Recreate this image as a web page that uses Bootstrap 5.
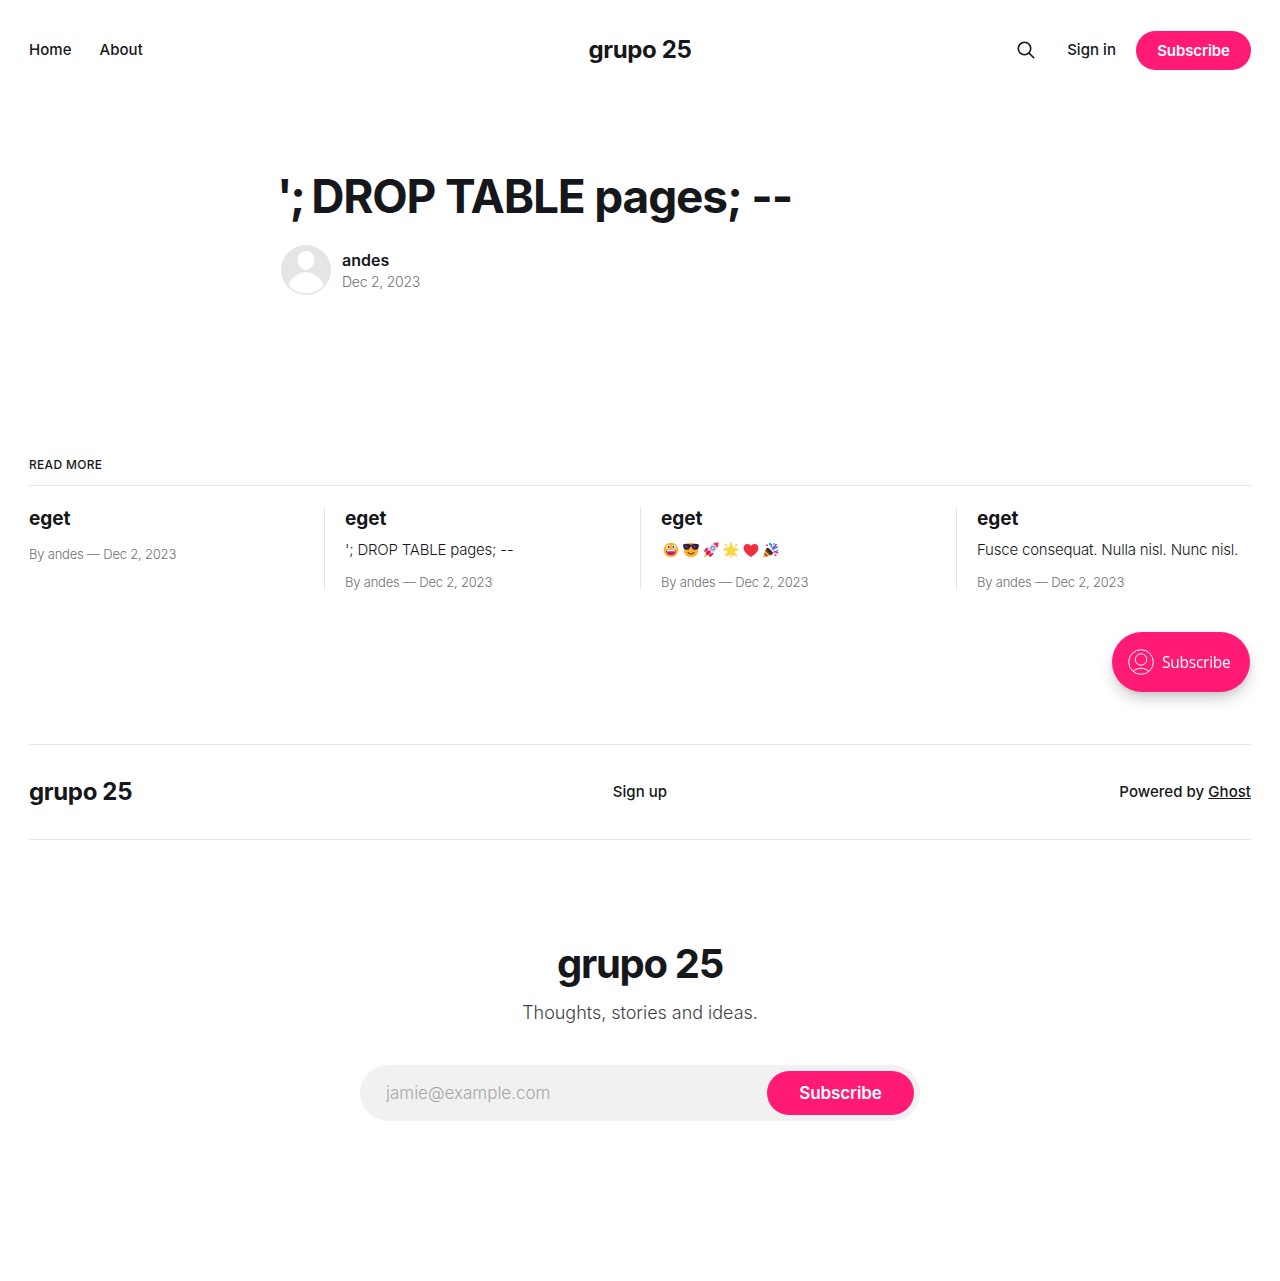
<!DOCTYPE html>
<html lang="en">
<head>
<meta charset="utf-8">
<meta name="viewport" content="width=device-width, initial-scale=1">
<title>grupo 25</title>
<link href="https://cdn.jsdelivr.net/npm/bootstrap@5.3.0/dist/css/bootstrap.min.css" rel="stylesheet">
<style>
  :root { --accent: #ff1a75; --ink: #15171a; --muted: #6f7071; --rule: #e8e8e8; }
  body { font-family: Inter, "Liberation Sans", sans-serif; color: var(--ink); background: #fff; font-size: 15px; line-height: 1.6; }
  a { color: inherit; text-decoration: none; }
  .site-wrap { padding: 0 29px; }
  .site-head { height: 100px; font-weight: 500; letter-spacing: .04px; }
  .head-side { flex: 1 1 0; }
  .site-nav { gap: 28px; }
  .brand-name { font-size: 24px; font-weight: 700; line-height: 1; letter-spacing: -.34px; }
  .btn-accent { --bs-btn-bg: var(--accent); --bs-btn-color: #fff; --bs-btn-hover-bg: #e61769; --bs-btn-hover-color: #fff; --bs-btn-border-width: 0; --bs-btn-padding-y: 0; font-weight: 600; letter-spacing: -.1px; display: flex; align-items: center; justify-content: center; }
  .btn-head { width: 115px; height: 39px; margin: 1px 0 0 20px; font-size: 15px; padding: 2px 0 0; }
  .search-icon { width: 20px; height: 20px; margin-right: 31px; }
  .post-head { width: 720px; padding-top: 70px; height: 358px; }
  .post-title { font-size: 46px; font-weight: 700; line-height: 52px; letter-spacing: -1.15px; margin: 0 0 23px -3px; }
  .title-lead { letter-spacing: -2.7px; }
  .post-avatar { width: 50px; height: 50px; margin-left: 1px; }
  .byline { margin-left: 11px; padding-top: 3px; }
  .author-name { font-size: 16px; font-weight: 600; line-height: 21px; }
  .byline-date { font-size: 14px; font-weight: 300; line-height: 22px; letter-spacing: -.25px; color: var(--muted); }
  .more-label { font-size: 12px; font-weight: 500; line-height: 14px; letter-spacing: .3px; padding-bottom: 13px; border-bottom: 1px solid var(--rule); margin: 0 0 21px; }
  .more-row { --bs-gutter-x: 42px; }
  .post-col { height: 83px; }
  .post-col + .post-col { border-left: 1px solid var(--rule); padding-left: 20px; }
  .post-col:last-child { padding-right: 10px; }
  .feed-title { font-size: 19px; font-weight: 700; line-height: 24px; letter-spacing: -.05px; margin: 0 0 8px; }
  .feed-text { font-size: 15px; font-weight: 300; line-height: 22px; height: 22px; letter-spacing: -.2px; margin: 0 0 5px; white-space: nowrap; }
  .feed-meta { font-size: 13px; font-weight: 300; line-height: 20px; letter-spacing: -.2px; color: var(--muted); }
  .feed-text + .feed-meta { padding-top: 6px; }
  .feed-title + .feed-meta { padding-top: 5px; }
  .emoji-line { gap: 4px; padding-left: 2px; }
  .emoji-line svg { width: 16px; height: 16px; }
  .site-foot { margin-top: 154px; height: 96px; border-top: 1px solid var(--rule); border-bottom: 1px solid var(--rule); font-weight: 500; letter-spacing: .04px; }
  .site-foot .brand-name { display: inline-block; padding-top: 2px; }
  .cta { padding-top: 100px; }
  .cta-title { font-size: 40px; font-weight: 700; line-height: 48px; letter-spacing: -1.3px; margin: 0; }
  .cta-text { font-size: 18px; font-weight: 300; line-height: 28px; letter-spacing: -.03px; margin: 11px 0 38px; color: #404245; }
  .cta-form { width: 560px; height: 56px; padding: 6px; background: #f1f1f1; }
  .cta-form .form-control { background: none; border: 0; padding: 2px 20px 0; font-size: 17px; font-weight: 300; box-shadow: none; }
  .cta-form .form-control::placeholder { color: #a6a6a6; opacity: 1; }
  .btn-cta { width: 147px; height: 44px; font-size: 17px; padding: 2px 0 0; }
  .portal-btn { position: fixed; left: 1112px; top: 632px; width: 138px; height: 60px; padding: 0 0 0 16px; gap: 8px; background: var(--accent); color: #fff; border: 0; border-radius: 30px; box-shadow: 0 8px 16px -2px rgba(0,0,0,.2), 0 2px 6px rgba(0,0,0,.08); font: 400 15.5px "Open Sans", sans-serif; letter-spacing: -.25px; }
</style>
<script src="https://cdn.jsdelivr.net/npm/bootstrap@5.3.0/dist/js/bootstrap.bundle.min.js"></script>
</head>
<body>
<div class="site-wrap">
  <header class="site-head d-flex align-items-center">
    <nav class="site-nav head-side d-flex"><a href="#">Home</a><a href="#">About</a></nav>
    <a class="brand-name" href="#">grupo 25</a>
    <div class="head-side d-flex align-items-center justify-content-end">
      <svg class="search-icon" viewBox="0 0 20 20" fill="none" stroke="#15171a" stroke-width="1.6" stroke-linecap="round"><circle cx="8.500" cy="8.500" r="6.200"/><path d="M13.100 13.100L17.700 17.700"/></svg>
      <a class="sign-in" href="#">Sign in</a>
      <a class="btn btn-accent btn-head rounded-pill" href="#">Subscribe</a>
    </div>
  </header>

  <main>
    <article class="post-head mx-auto">
      <h1 class="post-title"><span class="title-lead">'; </span>DROP TABLE pages; --</h1>
      <div class="d-flex align-items-center">
        <svg class="post-avatar" viewBox="0 0 50 50"><circle cx="25" cy="25" r="25" fill="#e5e5e5"/><path d="M25 6c4.900 0 8.300 3.500 8.300 8.800S29.500 25 25 25s-8.300-4.900-8.300-10.200S20.100 6 25 6zM7.400 39.800C11 32 17.300 27.200 25 27.200S39 32 42.800 39.800C38.500 45.500 32 48.200 25 48.200S11.700 45.500 7.400 39.800z" fill="#fff"/></svg>
        <div class="byline">
          <div class="author-name">andes</div>
          <div class="byline-date">Dec 2, 2023</div>
        </div>
      </div>
    </article>

    <section>
      <h2 class="more-label text-uppercase">Read more</h2>
      <div class="row more-row">
        <article class="col-3 post-col">
          <h3 class="feed-title">eget</h3>
          <div class="feed-meta">By andes — Dec 2, 2023</div>
        </article>
        <article class="col-3 post-col">
          <h3 class="feed-title">eget</h3>
          <p class="feed-text">'; DROP TABLE pages; --</p>
          <div class="feed-meta">By andes — Dec 2, 2023</div>
        </article>
        <article class="col-3 post-col">
          <h3 class="feed-title">eget</h3>
          <p class="feed-text emoji-line d-flex align-items-center">
            <svg viewBox="0 0 16 16"><circle cx="8" cy="8" r="7.300" fill="#ffb02e"/><circle cx="5.200" cy="4.900" r="1.900" fill="#fff"/><circle cx="10.800" cy="4.900" r="1.900" fill="#fff"/><circle cx="5.600" cy="4.900" r="1" fill="#402a32"/><circle cx="10.400" cy="4.900" r="1" fill="#402a32"/><path d="M3.200 8h9.600c.2 3.500-1.900 5.200-4.800 5.200S3 11.500 3.200 8z" fill="#bb1d80"/><path d="M3.800 8h8.400v1.300H3.800z" fill="#fff"/></svg>
            <svg viewBox="0 0 16 16"><circle cx="8" cy="8" r="7.300" fill="#ffb02e"/><path d="M.2 2.400C3 1 5.600 2 8 2.800 10.400 2 13 1 15.800 2.400c.2 3.200-.8 5.400-3.800 5.400-2.300 0-3-1.800-3.400-3.200H7.400C7 6 6.300 7.800 4 7.800 1 7.800 0 5.600.2 2.400z" fill="#321b41"/><path d="M2.300 3.500l2 2M10.400 3.500l2 2" stroke="#8d65c5" stroke-width="1"/><path d="M5 10.500c1.500 2 4.500 2 6 0" fill="none" stroke="#402a32" stroke-width="1.100" stroke-linecap="round"/></svg>
            <svg viewBox="0 0 16 16"><path d="M5.500 5.500C3 5.500 1.500 7.500 1 9.800l3.500-.6zM10.500 10.500c0 2.500-2 4-4.300 4.500l.6-3.500z" fill="#ca0b4a"/><path d="M3 10.500l2.600 2.600L.8 15.400z" fill="#ffb02e"/><path d="M15.400.6C10.500.2 6.500 2.600 3.600 8.500l-.4 2.300 2 2 2.300-.4C13.400 9.500 15.800 5.500 15.400.6z" fill="#e1d8ec"/><path d="M15.400.6c-1.900-.2-3.600.1-5.200.9L14.500 5.800c.8-1.600 1.100-3.300.9-5.200zM4.200 7.300L2.500 10.800l2.700 2.700 3.500-1.700z" fill="#f8315f"/><circle cx="9.800" cy="6.200" r="1.900" fill="#9be4fb" stroke="#83549f" stroke-width=".8"/><path d="M7.200 8.800l-3.600 3.600" stroke="#ca0b4a" stroke-width="1.500"/></svg>
            <svg viewBox="0 0 16 16"><path d="M8 2.600l1.600 3.500 4 .5-2.900 2.700.7 4L8 11.400l-3.400 1.900.7-4-2.900-2.700 4-.5z" fill="#fcd53f" stroke="#fcd53f" stroke-width="1.800" stroke-linejoin="round"/><path d="M8 .5v2M8 13.500v2M.5 8h2M13.500 8h2M2.300 2.300l1.500 1.500M12.200 12.200l1.500 1.500M13.700 2.300l-1.500 1.500M3.800 12.200l-1.500 1.500" stroke="#f9c23c" stroke-width="1.100" stroke-linecap="round"/></svg>
            <svg viewBox="0 0 16 16"><path d="M8 15C4 12.700.6 9.200.6 6 .6 3.500 2.300 2 4.400 2 6 2 7.300 2.800 8 4c.7-1.200 2-2 3.600-2 2.100 0 3.800 1.500 3.800 4 0 3.200-3.400 6.700-7.400 9z" fill="#f0303f"/></svg>
            <svg viewBox="0 0 16 16"><path d="M3.300 6l6.500 6.500-8.600 2.700c-.7.200-1.200-.3-1-1z" fill="#ffb02e"/><path d="M2.500 8.300l5.200 5M1.400 11.500l3 2.800" stroke="#7d4533" stroke-width="1.300"/><ellipse cx="6.600" cy="9.200" rx="1.700" ry="4.300" transform="rotate(-45 6.600 9.200)" fill="#402a32"/><path d="M6 1.800c2.400 0 3 1.700 2 3.500M9.500 8c1-2 2.500-3 5.200-2.800" fill="none" stroke="#00a6ed" stroke-width="1.900"/><path d="M9.300 6.200c2-.3 2.700-2.500 4.200-4.200M10.500 10.500c1.800-1.600 3.500-.6 4.600.8" fill="none" stroke="#f70a8d" stroke-width="1.500"/><path d="M3.200 2.500h1.600v1.600H3.200zM11.700 12.300h1.600v1.600h-1.600z" fill="#f70a8d"/><path d="M10 1.300h1.500v1.500H10zM13.600 7.800h1.500v1.500h-1.500z" fill="#00a6ed"/></svg>
          </p>
          <div class="feed-meta">By andes — Dec 2, 2023</div>
        </article>
        <article class="col-3 post-col">
          <h3 class="feed-title">eget</h3>
          <p class="feed-text">Fusce consequat. Nulla nisl. Nunc nisl.</p>
          <div class="feed-meta">By andes — Dec 2, 2023</div>
        </article>
      </div>
    </section>
  </main>

  <footer>
    <div class="site-foot d-flex align-items-center">
      <div class="head-side"><a class="brand-name" href="#">grupo 25</a></div>
      <a class="foot-link" href="#">Sign up</a>
      <div class="head-side text-end"><span class="powered">Powered by <a class="text-decoration-underline" href="#">Ghost</a></span></div>
    </div>
    <section class="cta d-flex flex-column align-items-center">
      <h2 class="cta-title">grupo 25</h2>
      <p class="cta-text">Thoughts, stories and ideas.</p>
      <form class="cta-form d-flex align-items-center rounded-pill">
        <input class="form-control" type="email" placeholder="jamie@example.com" aria-label="Email">
        <button class="btn btn-accent btn-cta rounded-pill flex-shrink-0" type="button">Subscribe</button>
      </form>
    </section>
  </footer>
</div>

<button class="portal-btn d-flex align-items-center" type="button">
  <svg width="26" height="26" viewBox="0 0 26 26" fill="none" stroke="#fff" stroke-width="1"><circle cx="13" cy="13" r="12.300"/><circle cx="13" cy="10.500" r="5.700"/><path d="M5 22.300c4.500-4 11.500-4 16 0"/></svg>
  <span>Subscribe</span>
</button>
</body>
</html>
